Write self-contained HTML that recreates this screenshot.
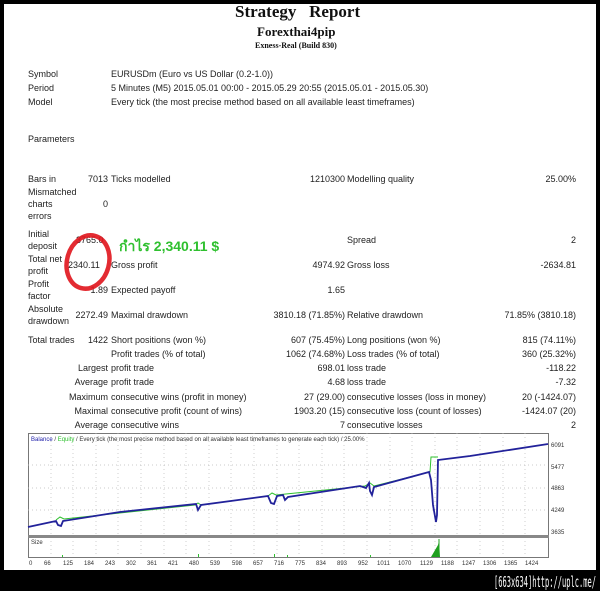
<!DOCTYPE html>
<html><head><meta charset="utf-8"><style>
*{margin:0;padding:0;box-sizing:border-box}
body{width:600px;height:591px;background:#000;position:relative;overflow:hidden;font-family:"Liberation Sans",sans-serif;font-size:9px;color:#222}
#pg{position:absolute;left:4px;top:4px;width:592px;height:566px;background:#fff}
.t{position:absolute;white-space:nowrap;line-height:12px}
.r{text-align:right}
.h{font-family:"Liberation Serif",serif;font-weight:bold;color:#111}
</style></head><body>
<div id="pg"></div>
<div class="t h" style="left:235px;top:2px;font-size:17px;line-height:20px">Strategy&nbsp;&nbsp;&nbsp;Report</div>
<div class="t h" style="left:257px;top:24px;font-size:13px;line-height:16px">Forexthai4pip</div>
<div class="t h" style="left:255px;top:41px;font-size:8px;line-height:10px">Exness-Real (Build 830)</div>

<div class="t" style="left:28px;top:68px">Symbol</div><div class="t" style="left:111px;top:68px">EURUSDm (Euro vs US Dollar (0.2-1.0))</div>
<div class="t" style="left:28px;top:82px">Period</div><div class="t" style="left:111px;top:82px">5 Minutes (M5) 2015.05.01 00:00 - 2015.05.29 20:55 (2015.05.01 - 2015.05.30)</div>
<div class="t" style="left:28px;top:96px">Model</div><div class="t" style="left:111px;top:96px">Every tick (the most precise method based on all available least timeframes)</div>
<div class="t" style="left:28px;top:133px">Parameters</div>

<div class="t" style="left:28px;top:173px">Bars in</div><div class="t r" style="right:492px;top:173px">7013</div><div class="t" style="left:111px;top:173px">Ticks modelled</div><div class="t r" style="right:255px;top:173px">1210300</div><div class="t" style="left:347px;top:173px">Modelling quality</div><div class="t r" style="right:24px;top:173px">25.00%</div>
<div class="t" style="left:28px;top:186px;line-height:12px">Mismatched<br>charts<br>errors</div><div class="t" style="left:103px;top:198px">0</div>

<div class="t" style="left:28px;top:228px">Initial<br>deposit</div><div class="t" style="left:76px;top:234px">3765.0</div><div class="t" style="left:347px;top:234px">Spread</div><div class="t r" style="right:24px;top:234px">2</div>
<div class="t" style="left:28px;top:253px">Total net<br>profit</div><div class="t" style="left:68px;top:259px">2340.11</div><div class="t" style="left:111px;top:259px">Gross profit</div><div class="t r" style="right:255px;top:259px">4974.92</div><div class="t" style="left:347px;top:259px">Gross loss</div><div class="t r" style="right:24px;top:259px">-2634.81</div>
<div class="t" style="left:28px;top:278px">Profit<br>factor</div><div class="t r" style="right:492px;top:284px">1.89</div><div class="t" style="left:111px;top:284px">Expected payoff</div><div class="t r" style="right:255px;top:284px">1.65</div>
<div class="t" style="left:28px;top:303px">Absolute<br>drawdown</div><div class="t r" style="right:492px;top:309px">2272.49</div><div class="t" style="left:111px;top:309px">Maximal drawdown</div><div class="t r" style="right:255px;top:309px">3810.18 (71.85%)</div><div class="t" style="left:347px;top:309px">Relative drawdown</div><div class="t r" style="right:24px;top:309px">71.85% (3810.18)</div>

<div class="t" style="left:28px;top:334px">Total trades</div><div class="t r" style="right:492px;top:334px">1422</div><div class="t" style="left:111px;top:334px">Short positions (won %)</div><div class="t r" style="right:255px;top:334px">607 (75.45%)</div><div class="t" style="left:347px;top:334px">Long positions (won %)</div><div class="t r" style="right:24px;top:334px">815 (74.11%)</div>
<div class="t" style="left:111px;top:348px">Profit trades (% of total)</div><div class="t r" style="right:255px;top:348px">1062 (74.68%)</div><div class="t" style="left:347px;top:348px">Loss trades (% of total)</div><div class="t r" style="right:24px;top:348px">360 (25.32%)</div>
<div class="t r" style="right:492px;top:362px">Largest</div><div class="t" style="left:111px;top:362px">profit trade</div><div class="t r" style="right:255px;top:362px">698.01</div><div class="t" style="left:347px;top:362px">loss trade</div><div class="t r" style="right:24px;top:362px">-118.22</div>
<div class="t r" style="right:492px;top:376px">Average</div><div class="t" style="left:111px;top:376px">profit trade</div><div class="t r" style="right:255px;top:376px">4.68</div><div class="t" style="left:347px;top:376px">loss trade</div><div class="t r" style="right:24px;top:376px">-7.32</div>
<div class="t r" style="right:492px;top:391px">Maximum</div><div class="t" style="left:111px;top:391px">consecutive wins (profit in money)</div><div class="t r" style="right:255px;top:391px">27 (29.00)</div><div class="t" style="left:347px;top:391px">consecutive losses (loss in money)</div><div class="t r" style="right:24px;top:391px">20 (-1424.07)</div>
<div class="t r" style="right:492px;top:405px">Maximal</div><div class="t" style="left:111px;top:405px">consecutive profit (count of wins)</div><div class="t r" style="right:255px;top:405px">1903.20 (15)</div><div class="t" style="left:347px;top:405px">consecutive loss (count of losses)</div><div class="t r" style="right:24px;top:405px">-1424.07 (20)</div>
<div class="t r" style="right:492px;top:419px">Average</div><div class="t" style="left:111px;top:419px">consecutive wins</div><div class="t r" style="right:255px;top:419px">7</div><div class="t" style="left:347px;top:419px">consecutive losses</div><div class="t r" style="right:24px;top:419px">2</div>

<div class="t" style="left:119px;top:237px;font-size:14px;line-height:18px;font-weight:bold;color:#2fc02f;font-family:'Liberation Sans','DejaVu Sans',sans-serif">กำไร 2,340.11 $</div>

<svg style="position:absolute;left:0;top:0" width="600" height="591">
<ellipse cx="88" cy="262" rx="21" ry="27" transform="rotate(15 88 262)" fill="none" stroke="#e0141c" stroke-width="4.5" opacity="0.9"/>
<rect x="28.5" y="433.5" width="520" height="124" fill="#fff" stroke="#777"/>
<g stroke="#bbb" stroke-dasharray="1,3" stroke-width="0.7">
<line x1="28" y1="465" x2="548" y2="465"/><line x1="28" y1="488" x2="548" y2="488"/><line x1="28" y1="510" x2="548" y2="510"/>
<line x1="51" y1="433" x2="51" y2="557"/><line x1="73" y1="433" x2="73" y2="557"/><line x1="96" y1="433" x2="96" y2="557"/><line x1="118" y1="433" x2="118" y2="557"/><line x1="141" y1="433" x2="141" y2="557"/><line x1="164" y1="433" x2="164" y2="557"/><line x1="186" y1="433" x2="186" y2="557"/><line x1="209" y1="433" x2="209" y2="557"/><line x1="231" y1="433" x2="231" y2="557"/><line x1="254" y1="433" x2="254" y2="557"/><line x1="277" y1="433" x2="277" y2="557"/><line x1="299" y1="433" x2="299" y2="557"/><line x1="322" y1="433" x2="322" y2="557"/><line x1="344" y1="433" x2="344" y2="557"/><line x1="367" y1="433" x2="367" y2="557"/><line x1="390" y1="433" x2="390" y2="557"/><line x1="412" y1="433" x2="412" y2="557"/><line x1="435" y1="433" x2="435" y2="557"/><line x1="457" y1="433" x2="457" y2="557"/><line x1="480" y1="433" x2="480" y2="557"/><line x1="503" y1="433" x2="503" y2="557"/><line x1="525" y1="433" x2="525" y2="557"/>
</g>
<rect x="28" y="535" width="521" height="3" fill="#888"/>
<polyline fill="none" stroke="#2ec02e" stroke-width="1" points="56,520 60,517 64,519 195,505 198,503 201,505 268,496 272,493 276,495 365,486 370,483 374,486 430,472 431,457 438,457"/>
<polyline fill="none" stroke="#22229a" stroke-width="1.8" points="28,527 56,521 58,525 61,526 63,521 120,512 196,504 198,510 201,505 268,496 271,503 274,504 277,496 283,495 285,500 288,497 360,486 366,488 369,483 370,491 372,495 374,487 429,472 431,480 433,505 436,522 437,515 438,460 470,456 548,444"/>
<path d="M431,557 L438,545 L439,541 L440,557 Z" fill="#1fa01f"/>
<line x1="439" y1="539" x2="439" y2="557" stroke="#1fa01f"/>
<g fill="#2ec02e"><rect x="62" y="555" width="1" height="2"/><rect x="198" y="554" width="1" height="3"/><rect x="274" y="554" width="1" height="3"/><rect x="287" y="555" width="1" height="2"/><rect x="370" y="555" width="1" height="2"/></g>
<g font-family="Liberation Sans,sans-serif" font-size="6" fill="#333">
<text x="31" y="441" font-size="6"><tspan fill="#2222aa">Balance</tspan> / <tspan fill="#2ec02e">Equity</tspan> / Every tick (the most precise method based on all available least timeframes to generate each tick) / 25.00%</text>
<text x="31" y="544">Size</text>
<text x="551" y="447">6091</text><text x="551" y="469">5477</text><text x="551" y="490">4863</text><text x="551" y="512">4249</text><text x="551" y="534">3635</text>
<g transform="translate(0,565)"><text x="29">0</text><text x="44">66</text><text x="63">125</text><text x="84">184</text><text x="105">243</text><text x="126">302</text><text x="147">361</text><text x="168">421</text><text x="189">480</text><text x="210">539</text><text x="232">598</text><text x="253">657</text><text x="274">716</text><text x="295">775</text><text x="316">834</text><text x="337">893</text><text x="358">952</text><text x="377">1011</text><text x="398">1070</text><text x="420">1129</text><text x="441">1188</text><text x="462">1247</text><text x="483">1306</text><text x="504">1365</text><text x="525">1424</text></g>
</g>
<text x="596" y="587" text-anchor="end" font-family="DejaVu Sans Mono,monospace" font-size="15" fill="#fff" textLength="102" lengthAdjust="spacingAndGlyphs">[663x634]http://uplc.me/</text>
</svg>
</body></html>
